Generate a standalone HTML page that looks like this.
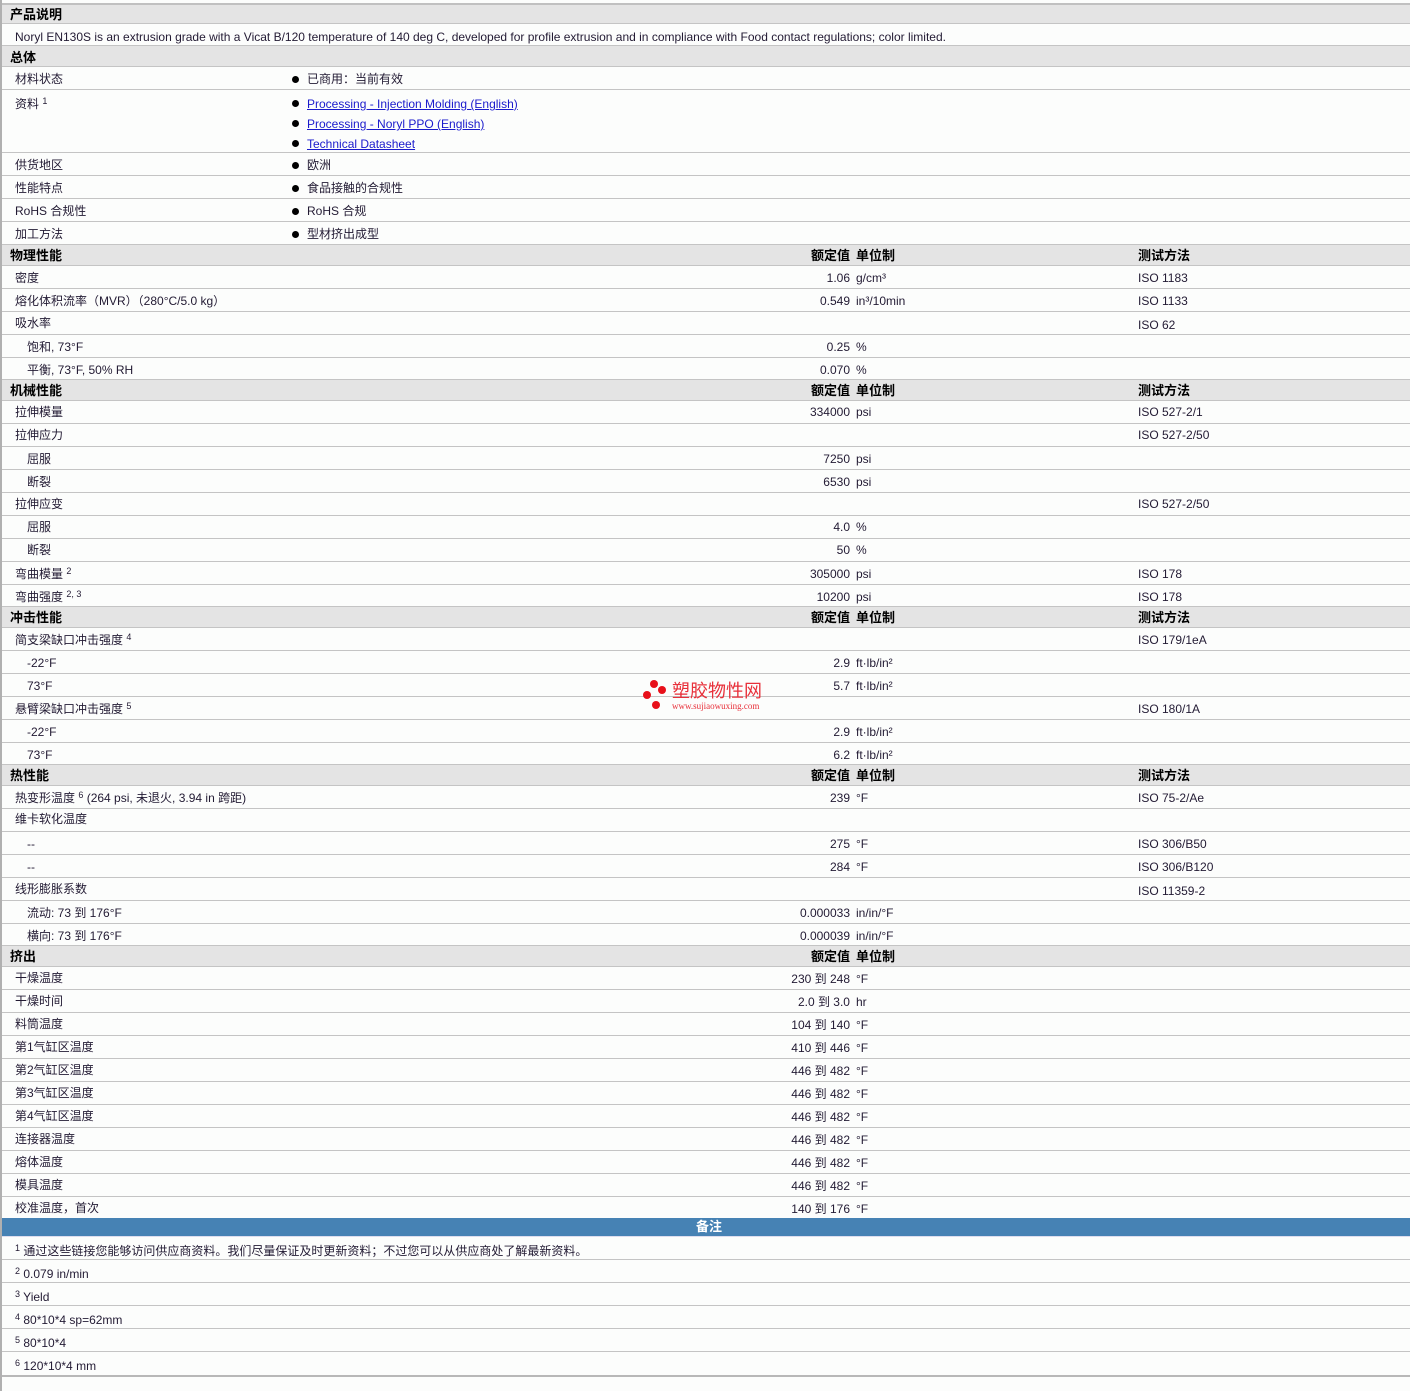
<!DOCTYPE html>
<html><head><meta charset="utf-8"><style>
*{margin:0;padding:0;box-sizing:border-box}
body{width:1410px;height:1391px;background:#fcfdfc;font-family:"Liberation Sans","Noto Sans CJK SC",sans-serif;font-size:12px;color:#221a33;position:relative;overflow:hidden}
.lb{position:absolute;left:0;top:0;width:2px;height:1391px;background:#b0b0b0}
.r{position:absolute;left:2px;width:1408px;border-bottom:1px solid #c4c4c4}
.r span{position:absolute;top:0;white-space:nowrap;margin-top:1px}
.h{background:#e4e4e4;font-weight:bold;font-size:13px;color:#000}
.l{left:13px}.s{left:25px}
.v{right:560px;text-align:right}
.u{left:854px}
.t{left:1136px}
.b{left:305px}
.dot{position:absolute;left:290px;width:7px;height:7px;border-radius:50%;background:#000;margin-top:1px}
sup{font-size:9px;vertical-align:top;position:relative;top:-3px}
a{color:#1a1acc;text-decoration:underline}
</style></head><body>
<div class="lb"></div>
<div class="r" style="top:0;height:5px;border-bottom:2px solid #c0c0c0"></div>
<div class="r h" style="top:5px;height:19px;line-height:18px"><span style="left:8px">产品说明</span></div>
<div class="r" style="top:24px;height:22px;line-height:24px"><span class="l">Noryl EN130S is an extrusion grade with a Vicat B/120 temperature of 140 deg C, developed for profile extrusion and in compliance with Food contact regulations; color limited.</span></div>
<div class="r h" style="top:46px;height:21px;line-height:21px"><span style="left:8px">总体</span></div>
<div class="r" style="top:67px;height:23px;line-height:23px"><span class="l">材料状态</span><i class="dot" style="top:8px"></i><span class="b">已商用：当前有效</span></div>
<div class="r" style="top:90px;height:63px;line-height:20px"><span class="l" style="top:3px">资料 <sup>1</sup></span>
<i class="dot" style="top:9px"></i><span class="b" style="top:3px"><a>Processing - Injection Molding (English)</a></span>
<i class="dot" style="top:29px"></i><span class="b" style="top:23px"><a>Processing - Noryl PPO (English)</a></span>
<i class="dot" style="top:49px"></i><span class="b" style="top:43px"><a>Technical Datasheet</a></span></div>
<div class="r" style="top:153px;height:23px;line-height:23px"><span class="l">供货地区</span><i class="dot" style="top:8px"></i><span class="b">欧洲</span></div>
<div class="r" style="top:176px;height:23px;line-height:23px"><span class="l">性能特点</span><i class="dot" style="top:8px"></i><span class="b">食品接触的合规性</span></div>
<div class="r" style="top:199px;height:23px;line-height:23px"><span class="l">RoHS 合规性</span><i class="dot" style="top:8px"></i><span class="b">RoHS 合规</span></div>
<div class="r" style="top:222px;height:23px;line-height:23px"><span class="l">加工方法</span><i class="dot" style="top:8px"></i><span class="b">型材挤出成型</span></div>

<div class="r h" style="top:245px;height:21px;line-height:19px"><span style="left:8px">物理性能</span><span class="v">额定值</span><span class="u">单位制</span><span class="t">测试方法</span></div>
<div class="r" style="top:266px;height:23px;line-height:23px"><span class="l">密度</span><span class="v">1.06</span><span class="u">g/cm³</span><span class="t">ISO 1183</span></div>
<div class="r" style="top:289px;height:23px;line-height:22px"><span class="l">熔化体积流率（MVR）（280°C/5.0 kg）</span><span class="v">0.549</span><span class="u">in³/10min</span><span class="t">ISO 1133</span></div>
<div class="r" style="top:312px;height:23px;line-height:20px"><span class="l">吸水率</span><span class="t" style="top:2px">ISO 62</span></div>
<div class="r" style="top:335px;height:23px;line-height:22px"><span class="s">饱和, 73°F</span><span class="v">0.25</span><span class="u">%</span></div>
<div class="r" style="top:358px;height:22px;line-height:22px"><span class="s">平衡, 73°F, 50% RH</span><span class="v">0.070</span><span class="u">%</span></div>

<div class="r h" style="top:380px;height:21px;line-height:19px"><span style="left:8px">机械性能</span><span class="v">额定值</span><span class="u">单位制</span><span class="t">测试方法</span></div>
<div class="r" style="top:401px;height:23px;line-height:21px"><span class="l">拉伸模量</span><span class="v">334000</span><span class="u">psi</span><span class="t">ISO 527-2/1</span></div>
<div class="r" style="top:424px;height:23px;line-height:21px"><span class="l">拉伸应力</span><span class="t">ISO 527-2/50</span></div>
<div class="r" style="top:447px;height:23px;line-height:22px"><span class="s">屈服</span><span class="v">7250</span><span class="u">psi</span></div>
<div class="r" style="top:470px;height:23px;line-height:22px"><span class="s">断裂</span><span class="v">6530</span><span class="u">psi</span></div>
<div class="r" style="top:493px;height:23px;line-height:21px"><span class="l">拉伸应变</span><span class="t">ISO 527-2/50</span></div>
<div class="r" style="top:516px;height:23px;line-height:21px"><span class="s">屈服</span><span class="v">4.0</span><span class="u">%</span></div>
<div class="r" style="top:539px;height:23px;line-height:21px"><span class="s">断裂</span><span class="v">50</span><span class="u">%</span></div>
<div class="r" style="top:562px;height:23px;line-height:23px"><span class="l">弯曲模量 <sup>2</sup></span><span class="v">305000</span><span class="u">psi</span><span class="t">ISO 178</span></div>
<div class="r" style="top:585px;height:22px;line-height:23px"><span class="l">弯曲强度 <sup>2, 3</sup></span><span class="v">10200</span><span class="u">psi</span><span class="t">ISO 178</span></div>

<div class="r h" style="top:607px;height:21px;line-height:19px"><span style="left:8px">冲击性能</span><span class="v">额定值</span><span class="u">单位制</span><span class="t">测试方法</span></div>
<div class="r" style="top:628px;height:23px;line-height:23px"><span class="l">简支梁缺口冲击强度 <sup>4</sup></span><span class="t">ISO 179/1eA</span></div>
<div class="r" style="top:651px;height:23px;line-height:22px"><span class="s">-22°F</span><span class="v">2.9</span><span class="u">ft·lb/in²</span></div>
<div class="r" style="top:674px;height:23px;line-height:22px"><span class="s">73°F</span><span class="v">5.7</span><span class="u">ft·lb/in²</span></div>
<div class="r" style="top:697px;height:23px;line-height:23px"><span class="l">悬臂梁缺口冲击强度 <sup>5</sup></span><span class="t">ISO 180/1A</span></div>
<div class="r" style="top:720px;height:23px;line-height:22px"><span class="s">-22°F</span><span class="v">2.9</span><span class="u">ft·lb/in²</span></div>
<div class="r" style="top:743px;height:22px;line-height:22px"><span class="s">73°F</span><span class="v">6.2</span><span class="u">ft·lb/in²</span></div>

<div class="r h" style="top:765px;height:21px;line-height:19px"><span style="left:8px">热性能</span><span class="v">额定值</span><span class="u">单位制</span><span class="t">测试方法</span></div>
<div class="r" style="top:786px;height:23px;line-height:23px"><span class="l">热变形温度 <sup>6</sup> (264 psi, 未退火, 3.94 in 跨距)</span><span class="v">239</span><span class="u">°F</span><span class="t">ISO 75-2/Ae</span></div>
<div class="r" style="top:809px;height:23px;line-height:19px"><span class="l">维卡软化温度</span></div>
<div class="r" style="top:832px;height:23px;line-height:23px"><span class="s">--</span><span class="v">275</span><span class="u">°F</span><span class="t">ISO 306/B50</span></div>
<div class="r" style="top:855px;height:23px;line-height:23px"><span class="s">--</span><span class="v">284</span><span class="u">°F</span><span class="t">ISO 306/B120</span></div>
<div class="r" style="top:878px;height:23px;line-height:21px"><span class="l">线形膨胀系数</span><span class="t" style="top:2px">ISO 11359-2</span></div>
<div class="r" style="top:901px;height:23px;line-height:22px"><span class="s">流动: 73 到 176°F</span><span class="v">0.000033</span><span class="u">in/in/°F</span></div>
<div class="r" style="top:924px;height:22px;line-height:22px"><span class="s">横向: 73 到 176°F</span><span class="v">0.000039</span><span class="u">in/in/°F</span></div>

<div class="r h" style="top:946px;height:21px;line-height:19px"><span style="left:8px">挤出</span><span class="v">额定值</span><span class="u">单位制</span></div>
<div class="r" style="top:967px;height:23px;line-height:20px"><span class="l">干燥温度</span><span class="v" style="top:1px">230 到 248</span><span class="u" style="top:1px">°F</span></div>
<div class="r" style="top:990px;height:23px;line-height:20px"><span class="l">干燥时间</span><span class="v" style="top:1px">2.0 到 3.0</span><span class="u" style="top:1px">hr</span></div>
<div class="r" style="top:1013px;height:23px;line-height:20px"><span class="l">料筒温度</span><span class="v" style="top:1px">104 到 140</span><span class="u" style="top:1px">°F</span></div>
<div class="r" style="top:1036px;height:23px;line-height:20px"><span class="l">第1气缸区温度</span><span class="v" style="top:1px">410 到 446</span><span class="u" style="top:1px">°F</span></div>
<div class="r" style="top:1059px;height:23px;line-height:20px"><span class="l">第2气缸区温度</span><span class="v" style="top:1px">446 到 482</span><span class="u" style="top:1px">°F</span></div>
<div class="r" style="top:1082px;height:23px;line-height:20px"><span class="l">第3气缸区温度</span><span class="v" style="top:1px">446 到 482</span><span class="u" style="top:1px">°F</span></div>
<div class="r" style="top:1105px;height:23px;line-height:20px"><span class="l">第4气缸区温度</span><span class="v" style="top:1px">446 到 482</span><span class="u" style="top:1px">°F</span></div>
<div class="r" style="top:1128px;height:23px;line-height:20px"><span class="l">连接器温度</span><span class="v" style="top:1px">446 到 482</span><span class="u" style="top:1px">°F</span></div>
<div class="r" style="top:1151px;height:23px;line-height:20px"><span class="l">熔体温度</span><span class="v" style="top:1px">446 到 482</span><span class="u" style="top:1px">°F</span></div>
<div class="r" style="top:1174px;height:23px;line-height:20px"><span class="l">模具温度</span><span class="v" style="top:1px">446 到 482</span><span class="u" style="top:1px">°F</span></div>
<div class="r" style="top:1197px;height:21px;line-height:20px;border-bottom:none"><span class="l">校准温度，首次</span><span class="v" style="top:1px">140 到 176</span><span class="u" style="top:1px">°F</span></div>

<div class="r" style="top:1218px;height:19px;background:#4682b4;color:#fff;font-weight:bold;font-size:13px;line-height:17px;text-align:center;border-bottom:1px solid #dde"><span style="left:694px;margin-top:0">备注</span></div>
<div class="r" style="top:1237px;height:23px;line-height:26px"><span class="l"><sup>1</sup> 通过这些链接您能够访问供应商资料。我们尽量保证及时更新资料；不过您可以从供应商处了解最新资料。</span></div>
<div class="r" style="top:1260px;height:23px;line-height:26px"><span class="l"><sup>2</sup> 0.079 in/min</span></div>
<div class="r" style="top:1283px;height:23px;line-height:26px"><span class="l"><sup>3</sup> Yield</span></div>
<div class="r" style="top:1306px;height:23px;line-height:26px"><span class="l"><sup>4</sup> 80*10*4 sp=62mm</span></div>
<div class="r" style="top:1329px;height:23px;line-height:26px"><span class="l"><sup>5</sup> 80*10*4</span></div>
<div class="r" style="top:1352px;height:25px;line-height:26px;border-bottom:2px solid #b8b8b8"><span class="l"><sup>6</sup> 120*10*4 mm</span></div>

<div style="position:absolute;left:642px;top:678px;width:130px;height:36px">
<i style="position:absolute;left:8px;top:2px;width:8px;height:8px;border-radius:50%;background:#e8101a"></i>
<i style="position:absolute;left:16px;top:8px;width:8px;height:8px;border-radius:50%;background:#e8101a"></i>
<i style="position:absolute;left:1px;top:13px;width:8px;height:8px;border-radius:50%;background:#e8101a"></i>
<i style="position:absolute;left:10px;top:23px;width:8px;height:8px;border-radius:50%;background:#e8101a"></i>
<span style="position:absolute;left:30px;top:4px;font-size:18px;color:#e8303a;white-space:nowrap;line-height:18px">塑胶物性网</span>
<span style="position:absolute;left:30px;top:23px;font-size:9px;color:#e8303a;font-family:'Liberation Serif',serif;white-space:nowrap">www.sujiaowuxing.com</span>
</div>
</body></html>
